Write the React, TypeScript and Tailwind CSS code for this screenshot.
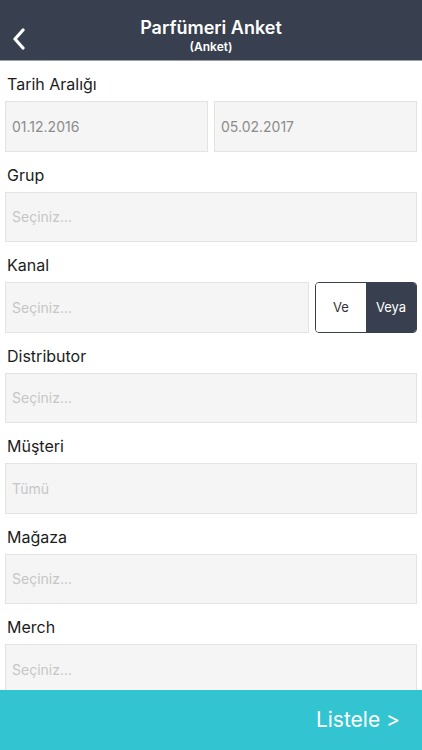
import React from "react";

const font = { fontFamily: "Inter, 'Liberation Sans', sans-serif" };

function Label({ children }: { children: React.ReactNode }) {
  return (
    <div className="h-[40px] flex items-center pt-[6px] px-[7px] text-[16px] text-[#1c1c1c]">
      {children}
    </div>
  );
}

function Box({ text, value = false, className = "" }: { text: string; value?: boolean; className?: string }) {
  return (
    <div
      className={`h-[50.5px] bg-[#f5f5f5] border border-[#e3e3e3] flex items-center px-[6px] text-[14px] ${
        value ? "text-[#8c8c8c]" : "text-[#c6c6c6]"
      } ${className}`}
    >
      {text}
    </div>
  );
}

export default function App() {
  return (
    <div className="w-[422px] h-[750px] bg-white relative overflow-hidden" style={font}>
      <div className="h-[61px] bg-[#383f4e] border-b border-[#9aa0a8] relative flex flex-col items-center pt-[17px] text-white">
        <svg className="absolute left-[11px] top-[28px]" width="16" height="22" viewBox="0 0 16 22">
          <path d="M12 2 L4 11 L12 20" fill="none" stroke="white" strokeWidth="3.2" strokeLinecap="round" strokeLinejoin="round" />
        </svg>
        <div className="text-[18px] font-semibold leading-[22px]">Parfümeri Anket</div>
        <div className="text-[12px] font-semibold leading-[16px]">(Anket)</div>
      </div>

      <div className="px-[5px]">
        <div className="-mx-[5px]"><Label>Tarih Aralığı</Label></div>
        <div className="flex gap-[6px]">
          <Box text="01.12.2016" value className="flex-1" />
          <Box text="05.02.2017" value className="flex-1" />
        </div>

        <div className="-mx-[5px]"><Label>Grup</Label></div>
        <Box text="Seçiniz..." />

        <div className="-mx-[5px]"><Label>Kanal</Label></div>
        <div className="flex gap-[6px]">
          <Box text="Seçiniz..." className="flex-1" />
          <div className="w-[102px] h-[50.5px] flex rounded-[4px] border border-[#383f4e] overflow-hidden text-[13px]">
            <div className="flex-1 bg-white text-[#333] flex items-center justify-center">Ve</div>
            <div className="flex-1 bg-[#383f4e] text-white flex items-center justify-center">Veya</div>
          </div>
        </div>

        <div className="-mx-[5px]"><Label>Distributor</Label></div>
        <Box text="Seçiniz..." />

        <div className="-mx-[5px]"><Label>Müşteri</Label></div>
        <Box text="Tümü" />

        <div className="-mx-[5px]"><Label>Mağaza</Label></div>
        <Box text="Seçiniz..." />

        <div className="-mx-[5px]"><Label>Merch</Label></div>
        <Box text="Seçiniz..." />
      </div>

      <div className="absolute left-0 right-0 bottom-0 h-[60px] bg-[#33c4d1] flex items-center justify-end pr-[22px] text-white text-[21px]">
        Listele &gt;
      </div>
    </div>
  );
}
